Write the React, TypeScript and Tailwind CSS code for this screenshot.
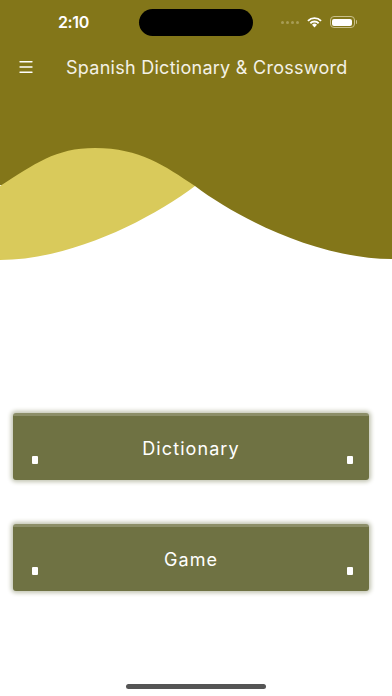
import { Menu } from "lucide-react";

function StatusBar() {
  return (
    <div className="relative h-11 flex items-center">
      <span className="ml-[58px] w-[40px] text-[16px] font-semibold text-white tracking-tight">2:10</span>
      <div className="absolute left-[139px] top-[9px] w-[114px] h-[27px] rounded-full bg-black" />
      <div className="ml-auto mr-[35px] flex items-center gap-[7px]">
        <div className="flex gap-[2px]">
          {[0, 1, 2, 3].map((i) => (
            <span key={i} className="w-[3px] h-[3px] rounded-full bg-[#a89d55]" />
          ))}
        </div>
        <svg width="17" height="12" viewBox="0 0 17 12">
          <path d="M8.5 11.5 L6 8.8 A3.6 3.6 0 0 1 11 8.8 Z" fill="white" />
          <path d="M3.7 6.6 A6.8 6.8 0 0 1 13.3 6.6 L12 7.9 A5 5 0 0 0 5 7.9 Z" fill="white" />
          <path d="M1.3 4.2 A10.2 10.2 0 0 1 15.7 4.2 L14.4 5.5 A8.4 8.4 0 0 0 2.6 5.5 Z" fill="white" />
        </svg>
        <div className="flex items-center">
          <div className="w-[25px] h-[12px] rounded-[4px] border border-[#c9c08a] p-[1.5px]">
            <div className="w-full h-full rounded-[2px] bg-white" />
          </div>
          <span className="w-[1.5px] h-[4px] rounded-r bg-[#c9c08a] ml-[1px]" />
        </div>
      </div>
    </div>
  );
}

function Wave() {
  return (
    <svg className="block" width="392" height="172" viewBox="0 0 392 172">
      <path d="M0 0 H392 V171 C320 171 240 132 195 98 L0 97 Z" fill="#837619" />
      <path
        d="M0 98 C35 76 55 60 95 60 C140 60 165 78 195 98 C150 132 70 172 0 172 Z"
        fill="#d9ca5b"
      />
    </svg>
  );
}

function BigButton({ label }: { label: string }) {
  return (
    <button className="relative ml-[13px] w-[356px] h-[67px] rounded-[3px] bg-[#6f7243] border-t-[3px] border-[#8c8e68] shadow-[0_0_4px_2px_#c2c4b2] flex items-center justify-center">
      <span className="text-[18px] tracking-[0.06em] text-white font-['Inter',sans-serif]">{label}</span>
      <span className="absolute left-[19px] top-[40px] w-[6px] h-[8px] bg-white rounded-[1px]" />
      <span className="absolute right-[16px] top-[40px] w-[6px] h-[8px] bg-white rounded-[1px]" />
    </button>
  );
}

export default function App() {
  return (
    <div className="w-[392px] h-[696px] bg-white flex flex-col font-['Inter','Liberation_Sans',sans-serif] overflow-hidden">
      <div className="bg-[#837619]">
        <StatusBar />
        <div className="h-11 flex items-center pt-[2px]">
          <Menu className="ml-[17px] text-white" size={18} strokeWidth={1.75} />
          <span className="ml-[31px] text-[18px] tracking-[0.015em] text-[#f3f1e6]">Spanish Dictionary &amp; Crossword</span>
        </div>
      </div>
      <Wave />
      <div className="mt-[153px] flex flex-col gap-[44px]">
        <BigButton label="Dictionary" />
        <BigButton label="Game" />
      </div>
      <div className="mt-auto mb-[7px] mx-auto w-[140px] h-[5px] rounded-full bg-[#555]" />
    </div>
  );
}
